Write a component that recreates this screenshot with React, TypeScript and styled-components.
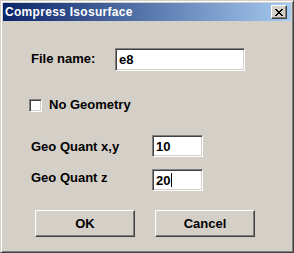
import React from "react";
import styled, { createGlobalStyle } from "styled-components";

const GlobalStyle = createGlobalStyle`
  html, body { margin: 0; padding: 0; background: #d4d0c8; }
  * { box-sizing: border-box; }
`;

const Window = styled.div`
  width: 294px;
  height: 253px;
  background: #d4d0c8;
  border: 1px solid;
  border-color: #d4d0c8 #404040 #404040 #d4d0c8;
  box-shadow: inset 1px 1px #ffffff, inset -1px -1px #808080;
  padding: 2px;
  display: flex;
  flex-direction: column;
  font-family: "Liberation Sans", Arial, sans-serif;
`;

const TitleBar = styled.div`
  height: 18px;
  flex: none;
  display: flex;
  align-items: center;
  justify-content: space-between;
  padding: 0 4px 0 2px;
  background: linear-gradient(to right, #0a246a, #a6caf0);
`;

const Title = styled.span`
  color: #ffffff;
  font-weight: bold;
  font-size: 12px;
  letter-spacing: 0.3px;
  line-height: 18px;
`;

const CloseButton = styled.div`
  width: 16px;
  height: 14px;
  background: #d4d0c8;
  border: 1px solid;
  border-color: #ffffff #404040 #404040 #ffffff;
  box-shadow: inset -1px -1px #808080;
  display: flex;
  align-items: center;
  justify-content: center;
`;

const Body = styled.div`
  flex: 1;
  display: flex;
  flex-direction: column;
`;

const Row = styled.div<{ $top: number; $left: number }>`
  display: flex;
  align-items: center;
  margin-top: ${(p) => p.$top}px;
  padding-left: ${(p) => p.$left}px;
`;

const Label = styled.span<{ $width?: number; $shift?: number }>`
  width: ${(p) => (p.$width ? `${p.$width}px` : "auto")};
  flex: none;
  font-size: 13px;
  font-weight: bold;
  color: #000000;
  line-height: 15px;
  position: relative;
  top: ${(p) => p.$shift ?? 0}px;
`;

const Field = styled.div<{ $width: number; $height: number }>`
  width: ${(p) => p.$width}px;
  height: ${(p) => p.$height}px;
  background: #ffffff;
  border: 1px solid;
  border-color: #808080 #ffffff #ffffff #808080;
  box-shadow: inset 1px 1px #404040, inset -1px -1px #d4d0c8;
  padding: 0 3px;
  display: flex;
  align-items: center;
  font-size: 13px;
  font-weight: bold;
  color: #000000;
`;

const Caret = styled.span`
  display: inline-block;
  width: 1px;
  height: 14px;
  background: #000000;
  margin-left: 1px;
`;

const CheckBox = styled.div`
  width: 13px;
  height: 13px;
  flex: none;
  background: #ffffff;
  border: 1px solid;
  border-color: #808080 #ffffff #ffffff #808080;
  box-shadow: inset 1px 1px #404040, inset -1px -1px #d4d0c8;
  margin-right: 7px;
`;

const ButtonRow = styled.div`
  display: flex;
  gap: 20px;
  margin-top: 19px;
  padding-left: 32px;
`;

const Button = styled.div`
  width: 100px;
  height: 27px;
  background: #d4d0c8;
  border: 1px solid;
  border-color: #ffffff #404040 #404040 #ffffff;
  box-shadow: inset -1px -1px #808080;
  display: flex;
  align-items: center;
  justify-content: center;
  font-size: 13px;
  font-weight: bold;
  color: #000000;
`;

export default function App() {
  return (
    <>
      <GlobalStyle />
      <Window>
        <TitleBar>
          <Title>Compress Isosurface</Title>
          <CloseButton>
            <svg width="8" height="7" viewBox="0 0 8 7">
              <path
                d="M0 0h2v1h1v1h2V1h1V0h2v1H7v1H6v1H5v1h1v1h1v1h1v1H6V6H5V5H3v1H2v1H0V6h1V5h1V4h1V3H2V2H1V1H0z"
                fill="#000"
              />
            </svg>
          </CloseButton>
        </TitleBar>
        <Body>
          <Row $top={27} $left={28}>
            <Label $width={84} $shift={-1}>File name:</Label>
            <Field $width={130} $height={23}>e8</Field>
          </Row>
          <Row $top={27} $left={26}>
            <CheckBox />
            <Label $shift={-1}>No Geometry</Label>
          </Row>
          <Row $top={22} $left={28}>
            <Label $width={121} $shift={0}>Geo Quant x,y</Label>
            <Field $width={51} $height={22}>10</Field>
          </Row>
          <Row $top={12} $left={28}>
            <Label $width={121} $shift={-3}>Geo Quant z</Label>
            <Field $width={51} $height={22}>
              20
              <Caret />
            </Field>
          </Row>
          <ButtonRow>
            <Button>OK</Button>
            <Button>Cancel</Button>
          </ButtonRow>
        </Body>
      </Window>
    </>
  );
}
